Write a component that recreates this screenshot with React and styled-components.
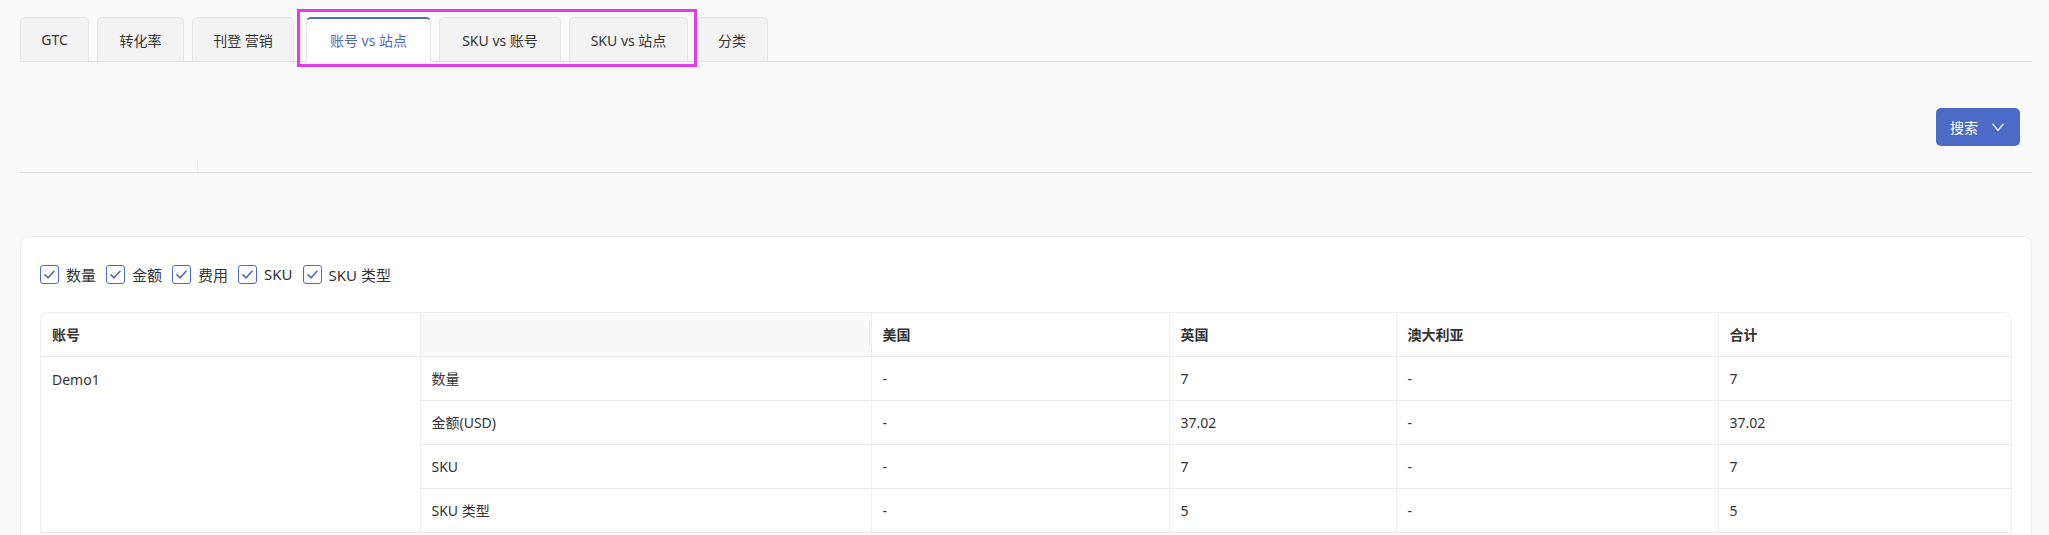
import React, { useState } from 'react'
import styled, { createGlobalStyle } from 'styled-components'

const GlobalStyle = createGlobalStyle`
    html, body {
        margin: 0;
        padding: 0;
        overflow: hidden;
        background: #fafafa;
        font-family: "Noto Sans", "Noto Sans CJK SC", sans-serif;
        color: #333;
    }
    * { box-sizing: border-box; }
`

const BLUE = '#4b6bc6'

const Page = styled.div`
    position: relative;
    padding: 17px 17px 0 20px;
`

const Highlight = styled.div`
    position: absolute;
    left: 297px;
    top: 9px;
    width: 400px;
    height: 58px;
    border: 3px solid #e43be7;
    pointer-events: none;
`

const TabBar = styled.div`
    display: flex;
    gap: 8px;
    height: 45px;
    border-bottom: 1px solid #e2e2e2;
`

const Tab = styled.button`
    width: ${p => p.$w}px;
    height: 45px;
    margin-bottom: -1px;
    margin-left: ${p => (p.$active ? '4px' : '0')};
    padding: 0;
    font-family: inherit;
    font-size: 14px;
    border: 1px solid #e6e6e6;
    border-top: ${p => (p.$active ? `2px solid ${BLUE}` : '1px solid #e6e6e6')};
    border-bottom: ${p => (p.$active ? '1px solid #fff' : '1px solid #e2e2e2')};
    border-radius: 5px 5px 0 0;
    background: ${p => (p.$active ? '#fff' : '#f3f3f3')};
    color: ${p => (p.$active ? BLUE : '#333')};
    cursor: pointer;
    white-space: nowrap;
`

const FilterBar = styled.div`
    display: flex;
    flex-direction: column;
    height: 111px;
    border-bottom: 1px solid #e0e0e0;
`

const FilterTop = styled.div`
    flex: 1;
    display: flex;
    justify-content: flex-end;
    padding: 46px 12px 0 0;
`

const FilterFoot = styled.div`
    height: 13px;
    display: flex;
`

const FootLabel = styled.div`
    width: 178px;
    border-right: 1px solid #ececec;
`

const SearchButton = styled.button`
    display: flex;
    align-items: center;
    gap: 14px;
    height: 38px;
    padding: 0 16px 0 14px;
    border: none;
    border-radius: 5px;
    background: ${BLUE};
    color: #fff;
    font-family: inherit;
    font-size: 14px;
    cursor: pointer;
`

const Card = styled.div`
    margin-top: 63px;
    padding: 27px 19px 20px 19px;
    background: #fff;
    border: 1px solid #ededed;
    border-radius: 8px;
`

const Checks = styled.div`
    display: flex;
    align-items: center;
    gap: 10px;
    height: 20px;
`

const CheckItem = styled.label`
    display: flex;
    align-items: center;
    gap: 7px;
    font-size: 15px;
    color: #333;
    cursor: pointer;
`

const Box = styled.span`
    width: 19px;
    height: 19px;
    display: flex;
    align-items: center;
    justify-content: center;
    border: 1.5px solid ${BLUE};
    border-radius: 3px;
    background: #fff;
`

const TableWrap = styled.div`
    margin-top: 28px;
    border: 1px solid #eee;
    border-bottom: none;
    border-radius: 8px 8px 0 0;
    overflow: hidden;
`

const Table = styled.table`
    width: 100%;
    border-collapse: collapse;
    table-layout: fixed;
    font-size: 14px;
`

const Th = styled.th`
    position: relative;
    height: 43px;
    padding: 0 11px;
    text-align: left;
    font-weight: 700;
    color: #333;
    background: ${p => (p.$gray ? '#f9f9f9' : '#fff')};
    border-left: ${p => (p.$first ? 'none' : '1px solid #efefef')};
    border-bottom: 1px solid #eaeaea;

    &::after {
        content: ${p => (p.$gray ? '""' : 'none')};
        position: absolute;
        right: 1px;
        top: 9px;
        height: 24px;
        width: 1px;
        background: #e8e8e8;
    }
`

const Td = styled.td`
    height: 44px;
    padding: 0 11px;
    color: #333;
    vertical-align: ${p => (p.$top ? 'top' : 'middle')};
    padding-top: ${p => (p.$top ? '13px' : '0')};
    border-left: ${p => (p.$first ? 'none' : '1px solid #efefef')};
    border-bottom: 1px solid #eaeaea;
`

const tabs = [
    { label: 'GTC', w: 69 },
    { label: '转化率', w: 87 },
    { label: '刊登 营销', w: 102 },
    { label: '账号 vs 站点', w: 125 },
    { label: 'SKU vs 账号', w: 122 },
    { label: 'SKU vs 站点', w: 119 },
    { label: '分类', w: 72 },
]

const metrics = ['数量', '金额', '费用', 'SKU', 'SKU 类型']

const rows = [
    { name: '数量', us: '-', uk: '7', au: '-', total: '7' },
    { name: '金额(USD)', us: '-', uk: '37.02', au: '-', total: '37.02' },
    { name: 'SKU', us: '-', uk: '7', au: '-', total: '7' },
    { name: 'SKU 类型', us: '-', uk: '5', au: '-', total: '5' },
]

const CheckMark = () => (
    <svg width="13" height="13" viewBox="0 0 13 13" fill="none">
        <path d="M2 6.8 L5.2 9.8 L11 3.2" stroke={BLUE} strokeWidth="1.6" strokeLinecap="round" strokeLinejoin="round" />
    </svg>
)

const Caret = () => (
    <svg width="12" height="9" viewBox="0 0 12 9" fill="none">
        <path d="M0.8 1.2 L6 7.4 L11.2 1.2" stroke="#fff" strokeWidth="1.3" strokeLinecap="round" strokeLinejoin="round" />
    </svg>
)

const App = () => {
    const [active, setActive] = useState(3)

    return (
        <Page>
            <GlobalStyle />
            <TabBar>
                {tabs.map((t, i) => (
                    <Tab key={t.label} $w={t.w} $active={i === active} onClick={() => setActive(i)}>
                        {t.label}
                    </Tab>
                ))}
            </TabBar>
            <Highlight />

            <FilterBar>
                <FilterTop>
                    <SearchButton>
                        搜索
                        <Caret />
                    </SearchButton>
                </FilterTop>
                <FilterFoot>
                    <FootLabel />
                </FilterFoot>
            </FilterBar>

            <Card>
                <Checks>
                    {metrics.map(m => (
                        <CheckItem key={m}>
                            <Box><CheckMark /></Box>
                            {m}
                        </CheckItem>
                    ))}
                </Checks>

                <TableWrap>
                    <Table>
                        <colgroup>
                            <col style={{ width: 379 }} />
                            <col style={{ width: 451 }} />
                            <col style={{ width: 298 }} />
                            <col style={{ width: 227 }} />
                            <col style={{ width: 322 }} />
                            <col />
                        </colgroup>
                        <thead>
                            <tr>
                                <Th $first>账号</Th>
                                <Th $gray></Th>
                                <Th>美国</Th>
                                <Th>英国</Th>
                                <Th>澳大利亚</Th>
                                <Th>合计</Th>
                            </tr>
                        </thead>
                        <tbody>
                            {rows.map((r, i) => (
                                <tr key={r.name}>
                                    {i === 0 && <Td $first $top rowSpan={rows.length}>Demo1</Td>}
                                    <Td>{r.name}</Td>
                                    <Td>{r.us}</Td>
                                    <Td>{r.uk}</Td>
                                    <Td>{r.au}</Td>
                                    <Td>{r.total}</Td>
                                </tr>
                            ))}
                        </tbody>
                    </Table>
                </TableWrap>
            </Card>
        </Page>
    )
}

export default App
